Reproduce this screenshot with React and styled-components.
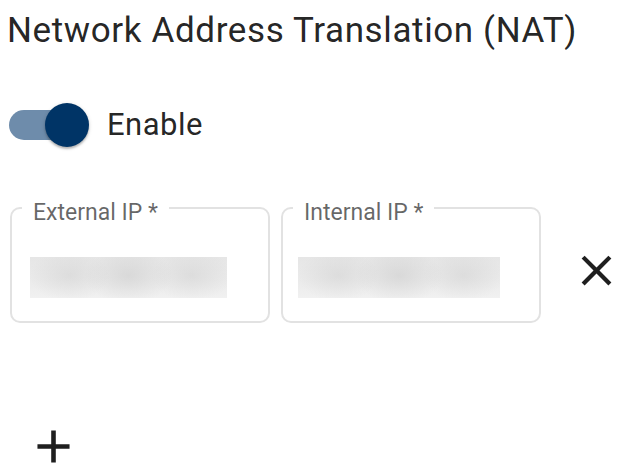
import React from "react";
import styled, { createGlobalStyle } from "styled-components";
import { MdClose, MdAdd } from "react-icons/md";

const GlobalStyle = createGlobalStyle`
  body {
    margin: 0;
    background: #fff;
    font-family: Roboto, "Noto Sans", sans-serif;
  }
`;

const NatForm = () => {
  //NAT rules editor
  return (
    <>
      <GlobalStyle />
      <Page>
        <Title>Network Address Translation (NAT)</Title>

        <SwitchRow>
          <Switch>
            <Track />
            <Thumb />
          </Switch>
          <SwitchLabel>Enable</SwitchLabel>
        </SwitchRow>

        <FieldRow>
          <Field>
            <Label>External IP *</Label>
            <Blurred $width={197} />
          </Field>
          <Field>
            <Label>Internal IP *</Label>
            <Blurred $width={202} $left={15} />
          </Field>
          <IconButton $top={38} $left={19}>
            <MdClose size={51} />
          </IconButton>
        </FieldRow>

        <IconButton $top={96} $left={17}>
          <MdAdd size={55} />
        </IconButton>
      </Page>
    </>
  );
};

export default NatForm;

const Page = styled.div`
  padding: 10px 0 0 9px;
  color: rgba(0, 0, 0, 0.87);
`;

const Title = styled.h1`
  margin: 0 0 0 -2px;
  font-size: 35px;
  font-weight: 400;
  letter-spacing: 0.62px;
  line-height: 42px;
  white-space: nowrap;
`;

const SwitchRow = styled.div`
  display: flex;
  align-items: center;
  margin-top: 51px;
  height: 44px;
`;

const Switch = styled.div`
  position: relative;
  width: 81px;
  height: 44px;
  flex-shrink: 0;
`;

const Track = styled.div`
  position: absolute;
  left: 0;
  top: 7px;
  width: 74px;
  height: 30px;
  border-radius: 15px;
  background: #6e8cab;
`;

const Thumb = styled.div`
  position: absolute;
  left: 36px;
  top: 0;
  width: 44px;
  height: 44px;
  border-radius: 50%;
  background: #003466;
  box-shadow: 0 2px 2px rgba(0, 0, 0, 0.22), 0 1px 4px rgba(0, 0, 0, 0.14);
`;

const SwitchLabel = styled.span`
  margin-left: 17px;
  font-size: 31px;
  letter-spacing: 0.5px;
  line-height: 36px;
`;

const FieldRow = styled.div`
  display: flex;
  align-items: flex-start;
  gap: 11px;
  margin: 60px 0 0 1px;
`;

const Field = styled.div`
  position: relative;
  flex-shrink: 0;
  box-sizing: border-box;
  width: 260px;
  height: 116px;
  border: 2px solid #e2e2e2;
  border-radius: 10px;
  padding-top: 48px;
`;

const Label = styled.span`
  position: absolute;
  left: 10px;
  top: -7px;
  padding: 0 11px;
  background: #fff;
  color: rgba(0, 0, 0, 0.6);
  font-size: 23px;
  line-height: 22px;
  white-space: nowrap;
`;

const Blurred = styled.div`
  margin-left: ${(p) => p.$left ?? 18}px;
  width: ${(p) => p.$width}px;
  height: 41px;
  background:
    radial-gradient(ellipse 40px 26px at 20% 45%, rgba(205, 205, 205, 0.45), transparent),
    radial-gradient(ellipse 44px 28px at 50% 45%, rgba(200, 200, 200, 0.5), transparent),
    radial-gradient(ellipse 40px 26px at 82% 45%, rgba(205, 205, 205, 0.45), transparent),
    linear-gradient(#e6e6e6, #ebebeb 60%, #f1f1f1);
`;

const IconButton = styled.div`
  display: flex;
  flex-shrink: 0;
  margin: ${(p) => p.$top}px 0 0 ${(p) => p.$left}px;
  color: #1f1f1f;
  width: fit-content;
  svg {
    display: block;
  }
`;
